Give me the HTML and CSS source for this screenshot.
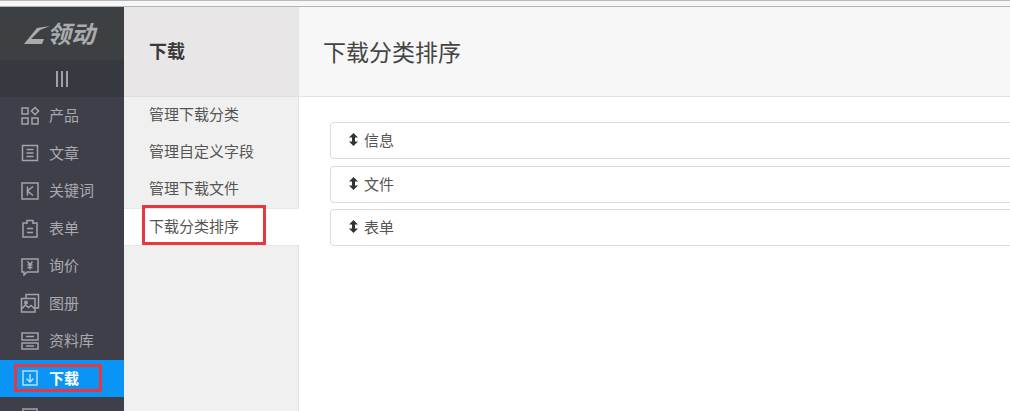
FILE: index.html
```html
<!DOCTYPE html>
<html>
<head>
    <meta charset="UTF-8">
    <title>下载分类排序</title>
    <link rel="stylesheet" href="styles.css">
</head>
<body>
<div class="topline"></div>
<div class="page">
    <div class="side">
        <div class="logo">
            <svg class="logo-mark" width="26" height="20" viewBox="0 0 26 20"><path d="M0 19 L13 3 L26 1 L16 5 L7 14 H20 L18 19 Z" fill="#a9abad"/></svg>
            <span class="logo-text">领动</span>
        </div>
        <div class="toggle"><i></i><i></i><i></i></div>
        <ul class="nav">
            <li>
                <svg width="20" height="20" viewBox="0 0 20 20"><path d="M2 2h6v6H2zM2 12h6v6H2zM12 12h6v6h-6zM15 1.500l3.600 3.600L15 8.700l-3.600-3.600z"/></svg>
                <span>产品</span>
            </li>
            <li>
                <svg width="20" height="20" viewBox="0 0 20 20"><path d="M2.500 2.500h15v15h-15zM6.500 6.500h7M6.500 10h7M6.500 13.500h7"/></svg>
                <span>文章</span>
            </li>
            <li>
                <svg width="20" height="20" viewBox="0 0 20 20"><path d="M2 2h16v16H2zM7.500 5.500v9M13 5.500l-5.500 4.500 5.500 4.500"/></svg>
                <span>关键词</span>
            </li>
            <li>
                <svg width="20" height="20" viewBox="0 0 20 20"><path d="M7 5H3v14h14V5h-4M7 6V2.500h6V6M7 10.500h6M7 14.500h6"/></svg>
                <span>表单</span>
            </li>
            <li>
                <svg width="20" height="20" viewBox="0 0 20 20"><path d="M2 3h16v13H7l-3 3v-3H2zM7.500 5.500L10 8.500l2.500-3M7.500 9h5M7.500 11.500h5M10 8.500v5"/></svg>
                <span>询价</span>
            </li>
            <li>
                <svg width="20" height="20" viewBox="0 0 20 20"><path d="M6 5V1.500h12.500V15H15M1.500 5.500H15V19H1.500zM1.500 16l4-4 3 2.500 2.500-2 4 3.500M5 8.500h2v2H5z"/></svg>
                <span>图册</span>
            </li>
            <li>
                <svg width="20" height="20" viewBox="0 0 20 20"><path d="M2 2h16v7H2zM2 12h16v6H2zM6 5.500h8M6 15h8"/></svg>
                <span>资料库</span>
            </li>
            <li class="on">
                <svg width="20" height="20" viewBox="0 0 20 20"><path d="M3 3h14v14H3zM10 6v8M6.500 10.500L10 14l3.500-3.500"/></svg>
                <span>下载</span>
                <div class="mark mark-nav"></div>
            </li>
            <li>
                <svg width="20" height="20" viewBox="0 0 20 20"><path d="M3 3h14v14H3zM6 8h8"/></svg>
            </li>
        </ul>
    </div>
    <div class="sub">
        <div class="sub-title">下载</div>
        <ul class="sub-list">
            <li>管理下载分类</li>
            <li>管理自定义字段</li>
            <li>管理下载文件</li>
            <li class="on">下载分类排序<div class="mark mark-sub"></div></li>
        </ul>
    </div>
    <div class="main">
        <div class="main-title">下载分类排序</div>
        <div class="rows">
            <div class="row"><svg width="9" height="13" viewBox="0 0 9 13"><path d="M4.500 0L9 4.500H6v4h3L4.500 13 0 8.500h3v-4H0z"/></svg>信息</div>
            <div class="row"><svg width="9" height="13" viewBox="0 0 9 13"><path d="M4.500 0L9 4.500H6v4h3L4.500 13 0 8.500h3v-4H0z"/></svg>文件</div>
            <div class="row"><svg width="9" height="13" viewBox="0 0 9 13"><path d="M4.500 0L9 4.500H6v4h3L4.500 13 0 8.500h3v-4H0z"/></svg>表单</div>
        </div>
    </div>
</div>
</body>
</html>
```

FILE: styles.css
```css
* {
    margin: 0;
    padding: 0;
    box-sizing: border-box;
    font-family: "Liberation Sans", "Noto Sans CJK SC", sans-serif;
    font-size: 15px;
}

ul, li {
    list-style: none;
}

html, body {
    height: 411px;
    overflow: hidden;
    background: #fff;
}

.topline {
    height: 7px;
    background: #f7f7f7;
    border-top: 1px solid #b8b8b8;
    border-bottom: 1px solid #b5b5b5;
}

.page {
    display: flex;
    height: 404px;
}

/* left dark menu */
.side {
    flex: none;
    width: 124px;
    background: #3f3f4a;
    overflow: hidden;
}

.logo {
    display: flex;
    align-items: center;
    height: 53px;
    padding: 2px 0 0 24px;
    background: #3c4043;
}

.logo-mark {
    margin-right: -3px;
}

.logo-text {
    font-size: 24px;
    line-height: 24px;
    font-weight: bold;
    font-style: italic;
    color: #a9abad;
}

.toggle {
    display: flex;
    justify-content: center;
    gap: 3px;
    align-items: center;
    height: 37px;
    background: #363a40;
}

.toggle i {
    width: 2px;
    height: 16px;
    background: #9fa1a5;
}

.nav li {
    position: relative;
    display: flex;
    align-items: center;
    height: 37.500px;
    padding-left: 20px;
    color: #a9a9ae;
}

.nav svg {
    flex: none;
    fill: none;
    stroke: #a3a3a8;
    stroke-width: 1.500;
}

.nav span {
    margin: -2px 0 0 9px;
}

.nav li.on {
    background: #0a94f5;
    color: #fff;
}

.nav li.on svg {
    stroke: #b9e0fc;
}

.nav li.on span {
    font-weight: bold;
}

/* red marks lying over the screenshot */
.mark {
    position: absolute;
    border: 3px solid #e8383f;
}

.mark-nav {
    left: 14px;
    top: 4px;
    width: 88px;
    height: 28px;
}

.mark-sub {
    left: 18px;
    top: -4px;
    width: 124px;
    height: 40px;
}

/* second column */
.sub {
    flex: none;
    width: 175px;
    background: #f0f0f0;
    border-right: 1px solid #e4e4e4;
}

.sub-title {
    height: 90px;
    line-height: 90px;
    padding-left: 25px;
    font-size: 18px;
    font-weight: bold;
    color: #3a3a3a;
    background: #e8e6e6;
    border-bottom: 1px solid #dedede;
}

.sub-list {
    margin-top: -0.100px;
}

.sub-list li {
    position: relative;
    height: 37.200px;
    line-height: 36px;
    padding-left: 25px;
    color: #555;
}

.sub-list li.on {
    height: 37.500px;
    line-height: 35px;
    background: #fff;
    border-top: 1px solid #e8e8e8;
    border-bottom: 1px solid #e8e8e8;
    margin-right: -1px;
}

/* right content */
.main {
    flex: 1;
    min-width: 0;
    overflow: hidden;
}

.main-title {
    height: 90px;
    line-height: 92px;
    padding-left: 24px;
    font-size: 23px;
    color: #444;
    background: #f7f7f7;
    border-bottom: 1px solid #e2e2e2;
}

.rows {
    display: flex;
    flex-direction: column;
    gap: 6.500px;
    width: 800px;
    padding: 25px 0 0 31px;
}

.row {
    display: flex;
    align-items: center;
    height: 37px;
    padding: 0 0 2px 18px;
    color: #555;
    background: #fff;
    border: 1px solid #dcdcdc;
    border-radius: 4px;
}

.row svg {
    margin-right: 6px;
    fill: #333;
}
```
